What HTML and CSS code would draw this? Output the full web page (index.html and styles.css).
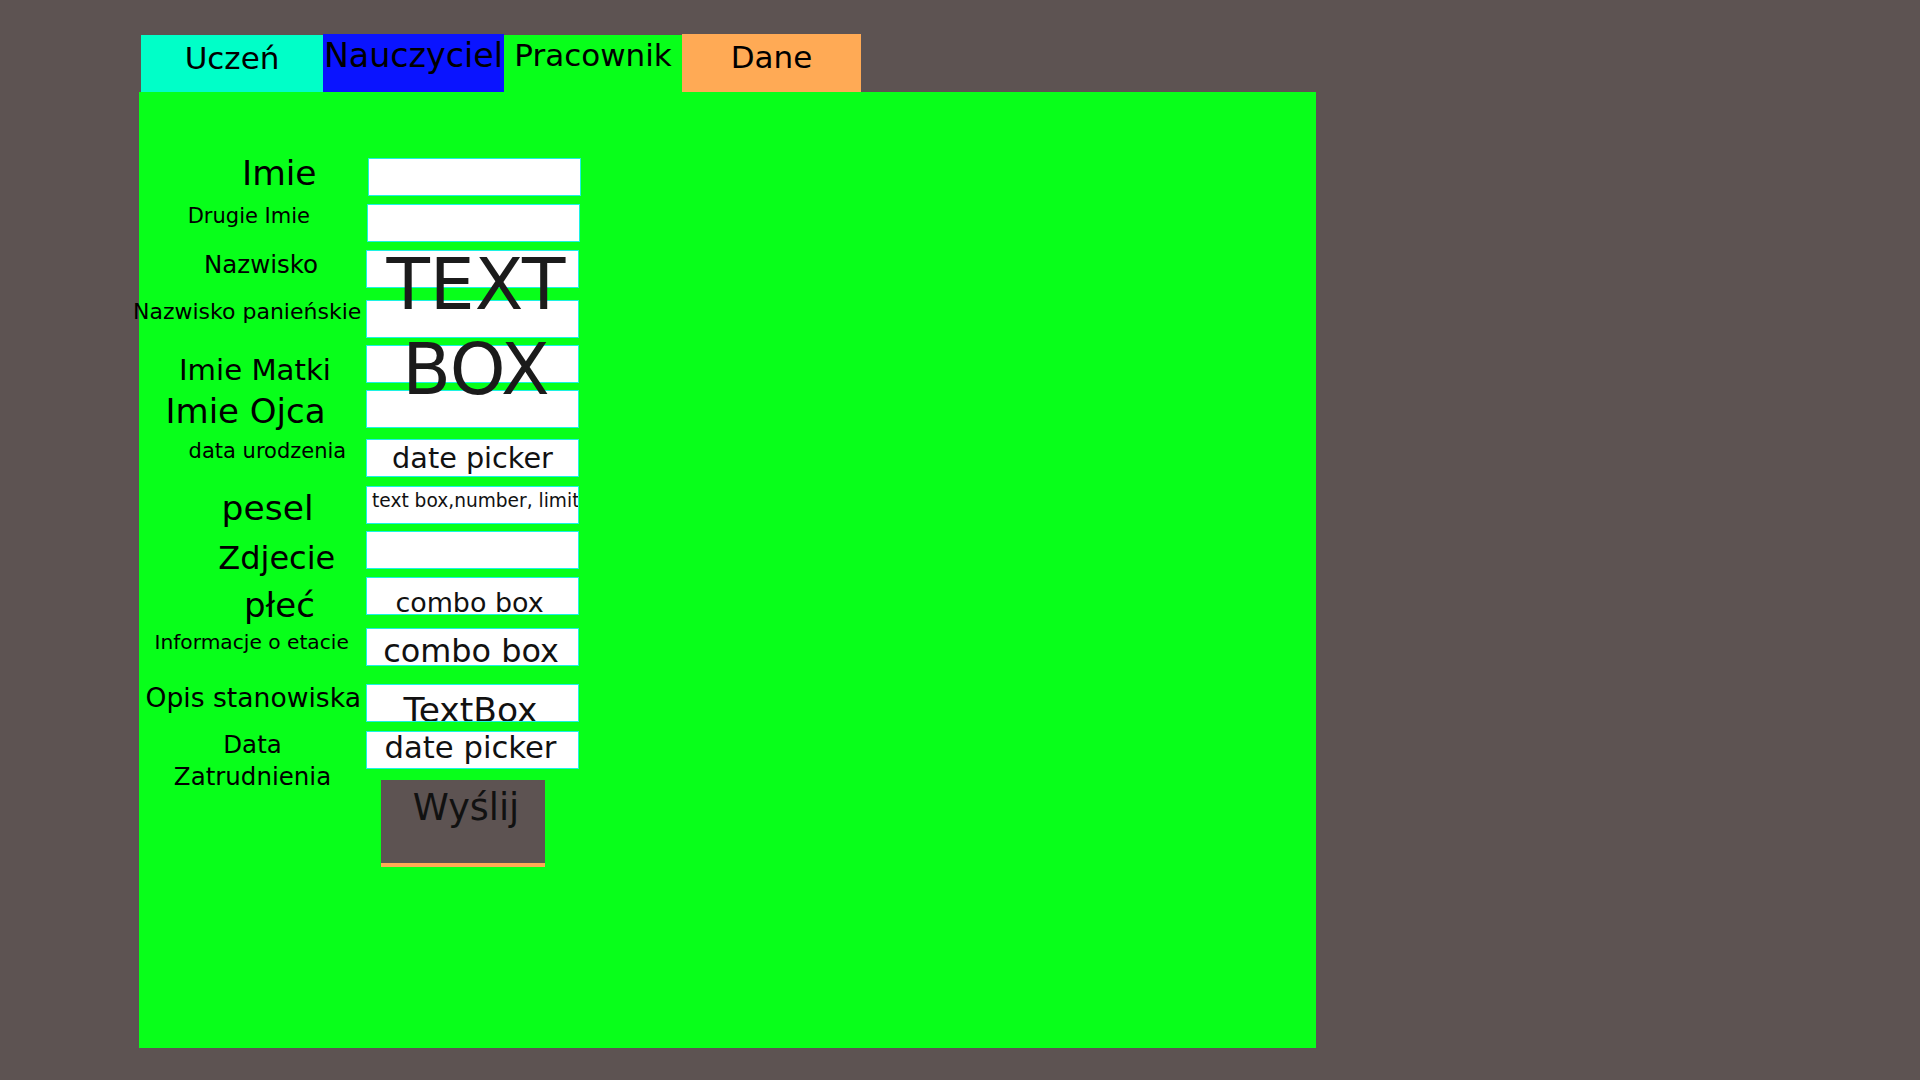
FILE: index.html
```html
<!DOCTYPE html>
<html lang="pl">
<head>
<meta charset="utf-8">
<title>Pracownik</title>
<link rel="stylesheet" href="styles.css">
</head>
<body>
<div class="app">
  <nav class="tabs">
    <div class="tab tab-uczen">Uczeń</div>
    <div class="tab tab-nauczyciel">Nauczyciel</div>
    <div class="tab tab-pracownik">Pracownik</div>
    <div class="tab tab-dane">Dane</div>
  </nav>
  <main class="panel">
    <div class="labels">
      <div class="label l-imie">Imie</div>
      <div class="label l-drugie">Drugie Imie</div>
      <div class="label l-nazwisko">Nazwisko</div>
      <div class="label l-panienskie">Nazwisko panieńskie</div>
      <div class="label l-matki">Imie Matki</div>
      <div class="label l-ojca">Imie Ojca</div>
      <div class="label l-urodzenia">data urodzenia</div>
      <div class="label l-pesel">pesel</div>
      <div class="label l-zdjecie">Zdjecie</div>
      <div class="label l-plec">płeć</div>
      <div class="label l-etat">Informacje o etacie</div>
      <div class="label l-opis">Opis stanowiska</div>
      <div class="label l-zatrudnienie">Data<br>Zatrudnienia</div>
    </div>
    <div class="fields">
      <div class="field f-imie"></div>
      <div class="field f-drugie"></div>
      <div class="field f-nazwisko"></div>
      <div class="field f-panienskie"></div>
      <div class="field f-matki"></div>
      <div class="field f-ojca"></div>
      <div class="field f-urodzenia">date picker</div>
      <div class="field f-pesel">text box,number, limit</div>
      <div class="field f-zdjecie"></div>
      <div class="field f-plec">combo box</div>
      <div class="field f-etat">combo box</div>
      <div class="field f-opis">TextBox</div>
      <div class="field f-zatrudnienie">date picker</div>
      <button class="submit" type="button">Wyślij</button>
      <div class="overlay-text">TEXT<br>BOX</div>
    </div>
  </main>
</div>
</body>
</html>
```
FILE: styles.css
```css
html, body {
  margin: 0;
  padding: 0;
}

body {
  background: #5d5352;
  font-family: "DejaVu Sans", Verdana, sans-serif;
  color: #000;
  width: 1920px;
  height: 1080px;
  overflow: hidden;
}

.app {
  padding: 34px 0 0 139px;
}

/* ---------- tabs ---------- */
.tabs {
  display: flex;
  align-items: flex-end;
  height: 58px;
  margin-left: 2px;
}

.tab {
  box-sizing: border-box;
  text-align: center;
  line-height: 1;
  white-space: nowrap;
  font-size: 31px;
}

.tab-uczen {
  width: 182px;
  height: 57px;
  background: #00ffc8;
  padding-top: 7.7px;
}

.tab-nauczyciel {
  width: 181px;
  height: 58px;
  background: #0a14ff;
  font-size: 33.3px;
  padding-top: 5px;
}

.tab-pracownik {
  width: 178px;
  height: 57px;
  background: #08ff1a;
  padding-top: 5.2px;
}

.tab-dane {
  width: 179px;
  height: 58px;
  background: #ffaa55;
  padding-top: 8.4px;
}

/* ---------- panel ---------- */
.panel {
  width: 1177px;
  height: 956px;
  background: #08ff1a;
  display: flex;
  align-items: flex-start;
}

.labels {
  width: 227px;
  flex: none;
  display: flex;
  flex-direction: column;
  align-items: flex-start;
}

.label {
  line-height: 1.164;
  white-space: nowrap;
}

.l-imie        { font-size: 34.5px; margin: 61px 0 0 103px; }
.l-drugie      { font-size: 21px;   margin: 11px 0 0 48.7px; }
.l-nazwisko    { font-size: 24.5px; margin: 22.7px 0 0 65px; }
.l-panienskie  { font-size: 22px;   margin: 19px 0 0 -6px; }
.l-matki       { font-size: 29.2px; margin: 29px 0 0 40px; }
.l-ojca        { font-size: 34px;   margin: 4.25px 0 0 26.5px; }
.l-urodzenia   { font-size: 21px;   margin: 8.25px 0 0 49.6px; }
.l-pesel       { font-size: 34.5px; margin: 24.1px 0 0 82.6px; }
.l-zdjecie     { font-size: 32px;   margin: 12.1px 0 0 79.3px; }
.l-plec        { font-size: 34px;   margin: 8.65px 0 0 105px; }
.l-etat        { font-size: 20.2px; margin: 5.5px 0 0 15.5px; }
.l-opis        { font-size: 26.6px; margin: 28.25px 0 0 6.5px; }
.l-zatrudnienie {
  font-size: 24.5px;
  line-height: 31.3px;
  margin-top: 15.6px;
  align-self: stretch;
  text-align: center;
}

/* ---------- fields ---------- */
.fields {
  position: relative;
  display: flex;
  flex-direction: column;
  align-items: flex-start;
  padding-top: 66px;
}

.field {
  box-sizing: border-box;
  width: 213px;
  height: 38px;
  background: #fff;
  border: 1px solid #1cf2e4;
  overflow: hidden;
  white-space: nowrap;
  text-align: center;
  line-height: 1;
  color: #111;
}

.f-imie        { margin-left: 2px; }
.f-drugie      { margin: 8px 0 0 1px; }
.f-nazwisko    { margin-top: 8px; }
.f-panienskie  { margin-top: 12px; }
.f-matki       { margin-top: 7px; }
.f-ojca        { margin-top: 7px; }
.f-urodzenia   { margin-top: 11px; font-size: 28.7px; padding-top: 3.8px; }
.f-pesel       { margin-top: 9px; font-size: 18.6px; padding: 5.2px 0 0 5px; text-align: left; }
.f-zdjecie     { margin-top: 7px; }
.f-plec        { margin-top: 8px; font-size: 26.9px; padding: 12px 6px 0 0; }
.f-etat        { margin-top: 13px; font-size: 31.9px; padding: 6.5px 3px 0 0; }
.f-opis        { margin-top: 18px; font-size: 34.5px; padding: 7.5px 4px 0 0; }
.f-zatrudnienie { margin-top: 9px; font-size: 30.7px; padding: 0.8px 4px 0 0; }

.submit {
  box-sizing: border-box;
  margin: 11px 0 0 15px;
  width: 164px;
  height: 87px;
  background: #5d5352;
  border: none;
  border-bottom: 4px solid #ffaa55;
  border-radius: 0;
  font-family: "DejaVu Sans", Verdana, sans-serif;
  font-size: 36.5px;
  line-height: 1;
  color: #111;
  padding: 9.5px 0 0 6px;
  display: flex;
  justify-content: center;
  align-items: flex-start;
}

.overlay-text {
  position: absolute;
  left: 0;
  top: 150.2px;
  width: 220px;
  text-align: center;
  font-size: 71px;
  line-height: 85px;
  color: #1b1b1b;
  pointer-events: none;
}
```
